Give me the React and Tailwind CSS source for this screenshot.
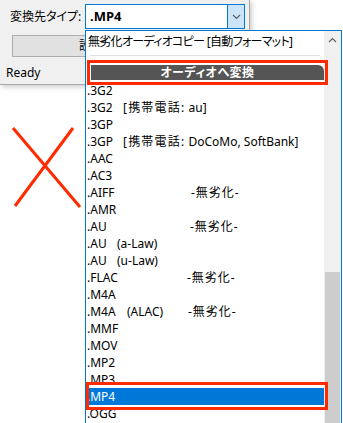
import React from "react";

const rows = [
  { name: ".3G2" },
  { name: ".3G2", w: "w-[36px]", phone: "au]" },
  { name: ".3GP" },
  { name: ".3GP", w: "w-[36px]", phone: "DoCoMo, SoftBank]" },
  { name: ".AAC" },
  { name: ".AC3" },
  { name: ".AIFF", w: "w-[104px]", lossless: true },
  { name: ".AMR" },
  { name: ".AU", w: "w-[103px]", lossless: true },
  { name: ".AU", w: "w-[30px]", note: "(a-Law)" },
  { name: ".AU", w: "w-[30px]", note: "(u-Law)" },
  { name: ".FLAC", w: "w-[100px]", lossless: true },
  { name: ".M4A" },
  { name: ".M4A", w: "w-[40px]", note: "(ALAC)", lossless: true },
  { name: ".MMF" },
  { name: ".MOV" },
  { name: ".MP2" },
  { name: ".MP3" },
  { name: ".MP4", selected: true },
  { name: ".OGG" },
];

const Chevron = ({ up }) => (
  <svg width="9" height="6" viewBox="0 0 9 6" className="block">
    <path
      d={up ? "M1 5 L4.5 1.5 L8 5" : "M1 1 L4.5 4.5 L8 1"}
      fill="none"
      stroke="#606060"
      strokeWidth="1.2"
    />
  </svg>
);

export default function App() {
  return (
    <div className="relative w-[343px] h-[423px] overflow-hidden bg-white text-black font-['Noto_Sans','Noto_Sans_CJK_JP',sans-serif] text-[12px] [font-feature-settings:'palt']">
      {/* dialog window */}
      <div className="w-[250px] h-[85px] bg-[#f0f0f0] border-r border-b border-[#a8a8a8] shadow-[2px_2px_5px_rgba(0,0,0,0.2)] flex flex-col">
        <div className="flex items-center mt-[4px] h-[25px]">
          <span className="w-[85px] pl-[10px] leading-none">変換先タイプ:</span>
          <div className="flex w-[160px] h-[25px] bg-white border border-[#0078d7]">
            <span className="flex-1 pl-[4px] leading-[23px] font-bold text-[13px]">.MP4</span>
            <div className="w-[17px] bg-[#cce4f7] border-l border-[#0078d7] flex items-center justify-center">
              <Chevron />
            </div>
          </div>
        </div>
        <div className="ml-[12px] mt-[6px] w-[224px] h-[22px] bg-[#e1e1e1] border border-[#adadad] flex items-center pl-[66px]">
          設定を保存する
        </div>
        <div className="mt-[9px] pl-[6px] leading-[14px]">Ready</div>
      </div>

      {/* drop-down list */}
      <div className="absolute left-[85px] top-[30px] w-[257px] h-[400px] bg-white border border-[#0078d7] flex">
        <div className="flex-1 pt-[2px] overflow-hidden">
          <div className="h-[17px] leading-[17px] pl-[2px] whitespace-nowrap tracking-[-0.7px]">
            無劣化オーディオコピー [自動フォーマット]
          </div>
          <div className="h-[10px] flex items-center px-[4px]">
            <div className="w-full h-px bg-[#e0e0e0]" />
          </div>
          <div className="h-[22px] pt-[5px] pl-[5px]">
            <div className="h-[15px] bg-[#555555] rounded-tr-[6px] text-white font-bold text-center leading-[15px] tracking-[0.5px]">
              オーディオへ変換
            </div>
          </div>
          {rows.map((r, i) => (
            <div
              key={i}
              className={`h-[17px] leading-[17px] pl-[1px] whitespace-nowrap flex ${
                r.selected ? "bg-[#0078d7] text-white" : ""
              }`}
            >
              <span className={r.w ? `inline-block shrink-0 ${r.w}` : ""}>{r.name}</span>
              {r.phone && (
                <span>
                  <span className="tracking-[1.2px]">[携帯電話:</span> {r.phone}
                </span>
              )}
              {r.note && (
                <span className={r.lossless ? "inline-block shrink-0 w-[61px]" : ""}>{r.note}</span>
              )}
              {r.lossless && <span className="tracking-[1px]">-無劣化-</span>}
            </div>
          ))}
        </div>
        <div className="w-[17px] bg-[#f0f0f0] flex flex-col">
          <div className="h-[17px] flex items-center justify-center">
            <Chevron up />
          </div>
          <div className="h-[224px]" />
          <div className="flex-1 bg-[#cdcdcd] mx-px" />
        </div>
      </div>

      {/* annotations */}
      <svg className="absolute left-0 top-0" width="90" height="215" viewBox="0 0 90 215">
        <line x1="13" y1="128" x2="80" y2="207" stroke="#ff2a00" strokeWidth="3" />
        <line x1="73" y1="128" x2="15" y2="206" stroke="#ff2a00" strokeWidth="3" />
      </svg>
      <div className="absolute left-[87px] top-[60px] w-[241px] h-[25px] border-[3px] border-[#ff2a00]" />
      <div className="absolute left-[86px] top-[382px] w-[242px] h-[28px] border-[3px] border-[#ff2a00]" />
    </div>
  );
}
